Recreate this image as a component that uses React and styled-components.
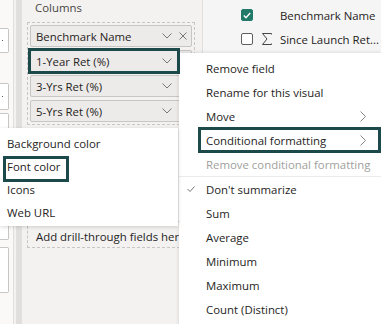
import React from "react";
import styled, { createGlobalStyle } from "styled-components";

const Global = createGlobalStyle`
  html, body { margin: 0; padding: 0; background: #f3f2f1; }
  body { font-family: "Open Sans", "Noto Sans", Arial, sans-serif; font-size: 11.4px; color: #252423; }
  * { box-sizing: border-box; }
`;

const HL = "#1c4a4b";
const FS = "11.4px";

const Screen = styled.div`
  position: relative;
  width: 381px;
  height: 324px;
  overflow: hidden;
  display: flex;
  background: #f3f2f1;
`;

const LeftStrip = styled.div`
  width: 14px;
  flex: none;
  background: #faf9f8;
  border-right: 1px solid #e1dfdd;
  display: flex;
  flex-direction: column;
`;

const StubBox = styled.div`
  margin-top: ${(p) => p.$gap}px;
  height: ${(p) => p.$h}px;
  width: 9px;
  background: #fff;
  border: 1px solid #c8c6c4;
  border-left: none;
  border-radius: 0 2px 2px 0;
  display: flex;
  align-items: center;
  padding-left: 2px;
`;

const Dot = styled.span`
  width: 1px;
  height: 1px;
  background: #605e5c;
`;

const Track = styled.div`
  width: 6px;
  flex: none;
  margin-left: 2px;
  background: #e1dfdd;
`;

const FieldsPane = styled.div`
  width: 181px;
  flex: none;
  padding: 0 7px 0 5px;
  border-right: 1px solid #e1dfdd;
  display: flex;
  flex-direction: column;
`;

const SectionLabel = styled.div`
  height: 15px;
  line-height: 15px;
  margin: 0 0 7px 8px;
  color: #484644;
  font-size: ${FS};
`;

const Well = styled.div`
  border: 1px dashed #c8c6c4;
  padding: 2px;
  display: flex;
  flex-direction: column;
  gap: 3px;
`;

const Pill = styled.div`
  position: relative;
  height: 22px;
  background: #edebe9;
  border: 1px solid #c8c6c4;
  border-radius: 2px;
  display: flex;
  align-items: center;
  padding: 0 4px 0 5px;
  font-size: ${FS};
  color: #252423;
  &::after {
    content: "";
    display: ${(p) => (p.$hl ? "block" : "none")};
    position: absolute;
    left: -3px;
    top: -3px;
    bottom: -3px;
    right: 11px;
    border: 3px solid ${HL};
    z-index: 20;
  }
`;

const PillText = styled.span`
  flex: 1;
  white-space: nowrap;
  overflow: hidden;
`;

const PillIcon = styled.svg`
  flex: none;
  margin-left: ${(p) => p.$ml || 0}px;
`;

const SectionGap = styled.div`
  height: 96px;
  flex: none;
`;

const DrillWell = styled.div`
  border: 1px dashed #c8c6c4;
  padding: 7px 0 2px 8px;
  line-height: 16px;
  white-space: nowrap;
  overflow: hidden;
  color: #252423;
  font-size: ${FS};
`;

const RightPane = styled.div`
  flex: 1;
  min-width: 0;
  padding: 3px 0 0 38px;
  display: flex;
  flex-direction: column;
  background: #f5f5f5;
`;

const FieldRow = styled.div`
  height: 24px;
  display: flex;
  align-items: center;
  white-space: nowrap;
  color: #252423;
  font-size: ${FS};
`;

const Check = styled.span`
  width: 12px;
  height: 12px;
  flex: none;
  border-radius: 2px;
  border: 1px solid ${(p) => (p.$on ? "#217a69" : "#605e5c")};
  background: ${(p) => (p.$on ? "#217a69" : "#fff")};
  display: flex;
  align-items: center;
  justify-content: center;
`;

const SigmaSlot = styled.span`
  width: 27px;
  flex: none;
  display: flex;
  justify-content: center;
`;

const Menu = styled.div`
  position: absolute;
  left: 179px;
  top: 53px;
  width: 210px;
  bottom: -20px;
  background: #fff;
  box-shadow: 0 0 4px rgba(0, 0, 0, 0.14);
  padding-top: 3px;
  z-index: 10;
`;

const Item = styled.div`
  position: relative;
  height: 24px;
  display: flex;
  align-items: center;
  padding-left: 27px;
  font-size: ${FS};
  white-space: nowrap;
  color: ${(p) => (p.$disabled ? "#a19f9d" : "#252423")};
  &::after {
    content: "";
    display: ${(p) => (p.$hl ? "block" : "none")};
    position: absolute;
    left: 19px;
    width: 177px;
    top: -1px;
    bottom: -1px;
    border: 3px solid ${HL};
  }
`;

const Divider = styled.div`
  height: 1px;
  background: #edebe9;
`;

const CheckMark = styled.svg`
  position: absolute;
  left: 8px;
  top: 9px;
`;

const Chevron = styled.svg`
  position: absolute;
  left: 181px;
  top: 7px;
`;

const SubMenu = styled.div`
  position: absolute;
  left: 0;
  top: 128px;
  width: 178px;
  height: 98px;
  background: #fff;
  box-shadow: 0 1px 4px rgba(0, 0, 0, 0.16);
  padding-top: 4px;
  z-index: 11;
`;

const SubItem = styled.div`
  position: relative;
  height: 23px;
  display: flex;
  align-items: center;
  padding-left: 7px;
  font-size: ${FS};
  color: #252423;
  &::after {
    content: "";
    display: ${(p) => (p.$hl ? "block" : "none")};
    position: absolute;
    left: 3px;
    width: 60px;
    top: 1px;
    height: 20px;
    border: 3px solid ${HL};
  }
`;

const Down = () => (
  <PillIcon width="10" height="6" viewBox="0 0 10 6">
    <polyline points="0.5,0.5 5,5 9.5,0.5" fill="none" stroke="#797775" strokeWidth="1" />
  </PillIcon>
);

const Close = () => (
  <PillIcon width="8" height="8" viewBox="0 0 8 8" $ml={7}>
    <path d="M0.5 0.5 L7.5 7.5 M7.5 0.5 L0.5 7.5" stroke="#797775" strokeWidth="1" />
  </PillIcon>
);

const Right = () => (
  <Chevron width="6" height="11" viewBox="0 0 6 11">
    <polyline points="0.5,0.5 5.5,5.5 0.5,10.5" fill="none" stroke="#8a8886" strokeWidth="1" />
  </Chevron>
);

const Sigma = () => (
  <svg width="10" height="12" viewBox="0 0 10 12">
    <polyline points="9.5,1.5 9.5,0.5 0.5,0.5 5,6 0.5,11.5 9.5,11.5 9.5,10.5" fill="none" stroke="#484644" strokeWidth="1" />
  </svg>
);

const stubs = [
  { gap: 28, h: 25, dot: true },
  { gap: 30, h: 27, dot: true },
  { gap: 3, h: 60 },
  { gap: 45, h: 22 },
  { gap: 7, h: 46 },
];

export default function App() {
  return (
    <>
      <Global />
      <Screen>
        <LeftStrip>
          {stubs.map((s, i) => (
            <StubBox key={i} $gap={s.gap} $h={s.h}>
              {s.dot && <Dot />}
            </StubBox>
          ))}
        </LeftStrip>
        <Track />
        <FieldsPane>
          <SectionLabel>Columns</SectionLabel>
          <Well>
            <Pill>
              <PillText>Benchmark Name</PillText>
              <Down />
              <Close />
            </Pill>
            <Pill $hl>
              <PillText>1-Year Ret (%)</PillText>
              <Down />
              <PillIcon width="15" height="8" />
            </Pill>
            <Pill>
              <PillText>3-Yrs Ret (%)</PillText>
              <Down />
              <PillIcon width="15" height="8" />
            </Pill>
            <Pill>
              <PillText>5-Yrs Ret (%)</PillText>
              <Down />
              <PillIcon width="15" height="8" />
            </Pill>
          </Well>
          <SectionGap />
          <DrillWell>Add drill-through fields here</DrillWell>
        </FieldsPane>
        <RightPane>
          <FieldRow>
            <Check $on>
              <svg width="8" height="7" viewBox="0 0 8 7">
                <polyline points="0.8,3.5 3,5.7 7.2,1" fill="none" stroke="#fff" strokeWidth="1.4" />
              </svg>
            </Check>
            <SigmaSlot />
            Benchmark Name
          </FieldRow>
          <FieldRow>
            <Check />
            <SigmaSlot>
              <Sigma />
            </SigmaSlot>
            Since Launch Ret...
          </FieldRow>
        </RightPane>

        <Menu>
          <Item>Remove field</Item>
          <Item>Rename for this visual</Item>
          <Item>
            Move
            <Right />
          </Item>
          <Item $hl>
            Conditional formatting
            <Right />
          </Item>
          <Item $disabled>Remove conditional formatting</Item>
          <Divider />
          <Item>
            <CheckMark width="8" height="6" viewBox="0 0 8 6">
              <polyline points="0.5,3 3,5.5 7.5,0.5" fill="none" stroke="#797775" strokeWidth="1" />
            </CheckMark>
            Don't summarize
          </Item>
          <Item>Sum</Item>
          <Item>Average</Item>
          <Item>Minimum</Item>
          <Item>Maximum</Item>
          <Item>Count (Distinct)</Item>
        </Menu>

        <SubMenu>
          <SubItem>Background color</SubItem>
          <SubItem $hl>Font color</SubItem>
          <SubItem>Icons</SubItem>
          <SubItem>Web URL</SubItem>
        </SubMenu>
      </Screen>
    </>
  );
}
